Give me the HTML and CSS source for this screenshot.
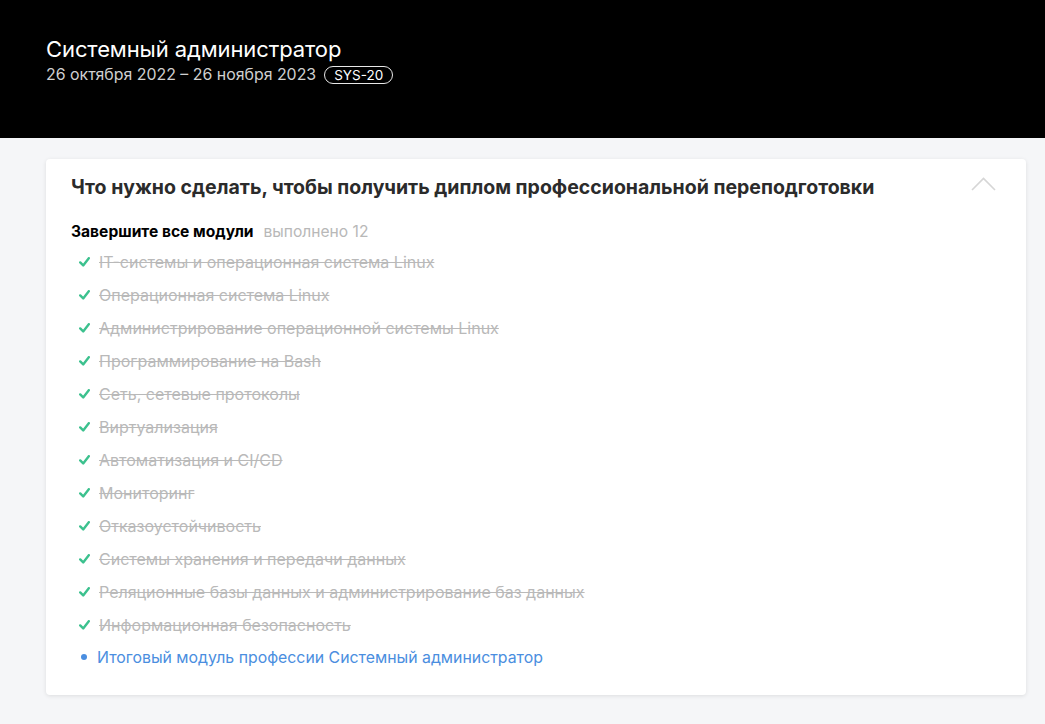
FILE: index.html
```html
<!DOCTYPE html>
<html lang="ru">
<head>
<meta charset="utf-8">
<link rel="stylesheet" href="styles.css">
</head>
<body>
<header class="hero">
  <h1 class="hero-title">Системный администратор</h1>
  <div class="hero-meta">
    <span class="hero-dates">26 октября 2022 – 26 ноября 2023</span>
    <span class="badge">SYS-20</span>
  </div>
</header>
<main class="content">
  <section class="card">
    <div class="card-head">
      <h2 class="card-title">Что нужно сделать, чтобы получить диплом профессиональной переподготовки</h2>
      <svg class="chevron" width="25" height="14" viewBox="0 0 25 14"><path d="M1 13 L12.5 1.5 L24 13" fill="none" stroke="#d6d6d6" stroke-width="1.6"/></svg>
    </div>
    <div class="modules-head">
      <span class="modules-title">Завершите все модули</span>
      <span class="modules-count">выполнено 12</span>
    </div>
    <ul class="modules">
      <li class="done"><svg class="check" width="11" height="10" viewBox="0 0 11 10"><path d="M1.2 5.4 L4.2 8.4 L9.8 1.2" fill="none" stroke="#3cc18e" stroke-width="2.4" stroke-linecap="round" stroke-linejoin="round"/></svg><span>IT-системы и операционная система Linux</span></li>
      <li class="done"><svg class="check" width="11" height="10" viewBox="0 0 11 10"><path d="M1.2 5.4 L4.2 8.4 L9.8 1.2" fill="none" stroke="#3cc18e" stroke-width="2.4" stroke-linecap="round" stroke-linejoin="round"/></svg><span>Операционная система Linux</span></li>
      <li class="done"><svg class="check" width="11" height="10" viewBox="0 0 11 10"><path d="M1.2 5.4 L4.2 8.4 L9.8 1.2" fill="none" stroke="#3cc18e" stroke-width="2.4" stroke-linecap="round" stroke-linejoin="round"/></svg><span>Администрирование операционной системы Linux</span></li>
      <li class="done"><svg class="check" width="11" height="10" viewBox="0 0 11 10"><path d="M1.2 5.4 L4.2 8.4 L9.8 1.2" fill="none" stroke="#3cc18e" stroke-width="2.4" stroke-linecap="round" stroke-linejoin="round"/></svg><span>Программирование на Bash</span></li>
      <li class="done"><svg class="check" width="11" height="10" viewBox="0 0 11 10"><path d="M1.2 5.4 L4.2 8.4 L9.8 1.2" fill="none" stroke="#3cc18e" stroke-width="2.4" stroke-linecap="round" stroke-linejoin="round"/></svg><span>Сеть, сетевые протоколы</span></li>
      <li class="done"><svg class="check" width="11" height="10" viewBox="0 0 11 10"><path d="M1.2 5.4 L4.2 8.4 L9.8 1.2" fill="none" stroke="#3cc18e" stroke-width="2.4" stroke-linecap="round" stroke-linejoin="round"/></svg><span>Виртуализация</span></li>
      <li class="done"><svg class="check" width="11" height="10" viewBox="0 0 11 10"><path d="M1.2 5.4 L4.2 8.4 L9.8 1.2" fill="none" stroke="#3cc18e" stroke-width="2.4" stroke-linecap="round" stroke-linejoin="round"/></svg><span>Автоматизация и CI/CD</span></li>
      <li class="done"><svg class="check" width="11" height="10" viewBox="0 0 11 10"><path d="M1.2 5.4 L4.2 8.4 L9.8 1.2" fill="none" stroke="#3cc18e" stroke-width="2.4" stroke-linecap="round" stroke-linejoin="round"/></svg><span>Мониторинг</span></li>
      <li class="done"><svg class="check" width="11" height="10" viewBox="0 0 11 10"><path d="M1.2 5.4 L4.2 8.4 L9.8 1.2" fill="none" stroke="#3cc18e" stroke-width="2.4" stroke-linecap="round" stroke-linejoin="round"/></svg><span>Отказоустойчивость</span></li>
      <li class="done"><svg class="check" width="11" height="10" viewBox="0 0 11 10"><path d="M1.2 5.4 L4.2 8.4 L9.8 1.2" fill="none" stroke="#3cc18e" stroke-width="2.4" stroke-linecap="round" stroke-linejoin="round"/></svg><span>Системы хранения и передачи данных</span></li>
      <li class="done"><svg class="check" width="11" height="10" viewBox="0 0 11 10"><path d="M1.2 5.4 L4.2 8.4 L9.8 1.2" fill="none" stroke="#3cc18e" stroke-width="2.4" stroke-linecap="round" stroke-linejoin="round"/></svg><span>Реляционные базы данных и администрирование баз данных</span></li>
      <li class="done"><svg class="check" width="11" height="10" viewBox="0 0 11 10"><path d="M1.2 5.4 L4.2 8.4 L9.8 1.2" fill="none" stroke="#3cc18e" stroke-width="2.4" stroke-linecap="round" stroke-linejoin="round"/></svg><span>Информационная безопасность</span></li>
      <li class="current"><span class="dot"></span><a class="current-link">Итоговый модуль профессии Системный администратор</a></li>
    </ul>
  </section>
</main>
</body>
</html>
```
FILE: styles.css
```css
* { box-sizing: border-box; }
html, body { margin: 0; padding: 0; }
body {
  background: #f5f6f8;
  font-family: Inter, "Noto Sans", sans-serif;
  width: 1045px;
  height: 724px;
  overflow: hidden;
}
.hero {
  background: #000;
  height: 138px;
  padding: 35px 46px 0;
  color: #fff;
}
.hero-title {
  margin: 0;
  font-size: 22px;
  font-weight: 400;
  line-height: 28px;
  letter-spacing: -0.1px;
}
.hero-meta {
  display: flex;
  align-items: center;
  gap: 8px;
  margin-top: 1px;
  line-height: 22px;
}
.hero-dates {
  font-size: 15.9px;
  color: #d0d0d0;
}
.badge {
  font-size: 13.5px;
  color: #fff;
  border: 1px solid #e8e8e8;
  border-radius: 9px;
  padding: 0 9px;
  line-height: 16px;
  height: 18px;
}
.content {
  padding: 21px 19px 0 46px;
}
.card {
  background: #fff;
  border-radius: 4px;
  box-shadow: 0 1px 4px rgba(0,0,0,0.1);
  padding: 16px 25px 20px;
  height: 536px;
}
.card-head {
  display: flex;
  align-items: center;
  justify-content: space-between;
}
.card-title {
  margin: 0;
  font-size: 19.5px;
  font-weight: 700;
  line-height: 25px;
  color: #2b2b2b;
}
.chevron {
  margin-right: 5px;
  margin-top: -7px;
}
.modules-head {
  margin-top: 21px;
  display: flex;
  align-items: baseline;
  gap: 10px;
  line-height: 22px;
}
.modules-title {
  font-size: 15.6px;
  font-weight: 700;
  color: #000;
}
.modules-count {
  font-size: 15.6px;
  color: #b8b8b8;
}
.modules {
  list-style: none;
  margin: 2px 0 0;
  padding: 0 0 0 8px;
}
.modules li {
  display: flex;
  align-items: center;
  height: 33px;
  font-size: 16px;
}
.modules li.current {
  height: 32px;
  font-size: 15.85px;
}
.check {
  margin-right: 9px;
  flex: none;
}
.done span {
  color: #b9b9b9;
  text-decoration: line-through;
}
.dot {
  width: 6px;
  height: 6px;
  border-radius: 50%;
  background: #4a8ee0;
  margin: 0 10px 0 2px;
  flex: none;
}
.current-link {
  color: #4a8ee0;
}
```
